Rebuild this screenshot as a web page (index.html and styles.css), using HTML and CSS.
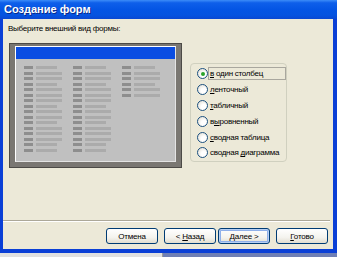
FILE: index.html
```html
<!DOCTYPE html>
<html lang="ru">

<head>
    <meta charset="UTF-8">
    <meta name="viewport" content="width=device-width, initial-scale=1.0">
    <title>Создание форм</title>
    <link rel="stylesheet" href="styles.css">
</head>

<body>
    <div class="window">
        <div class="titlebar">Создание форм</div>
        <div class="dialog-body">
            <p class="prompt">Выберите внешний вид формы:</p>
            <div class="main">
                <!-- образец формы -->
                <div class="preview">
                    <div class="preview-screen">
                        <div class="preview-caption"></div>
                        <div class="preview-fields">
                            <div class="preview-col">
                                <span class="row short"></span>
                                <span class="row"></span>
                                <span class="row"></span>
                                <span class="row short"></span>
                                <span class="row"></span>
                                <span class="row"></span>
                                <span class="row"></span>
                                <span class="row short"></span>
                                <span class="row"></span>
                                <span class="row"></span>
                                <span class="row short"></span>
                                <span class="row"></span>
                                <span class="row"></span>
                                <span class="row"></span>
                                <span class="row short"></span>
                                <span class="row short"></span>
                            </div>
                            <div class="preview-col">
                                <span class="row short"></span>
                                <span class="row"></span>
                                <span class="row"></span>
                                <span class="row short"></span>
                                <span class="row"></span>
                                <span class="row"></span>
                                <span class="row"></span>
                                <span class="row short"></span>
                                <span class="row"></span>
                                <span class="row"></span>
                                <span class="row short"></span>
                                <span class="row"></span>
                                <span class="row"></span>
                                <span class="row"></span>
                                <span class="row short"></span>
                                <span class="row short"></span>
                            </div>
                            <div class="preview-col">
                                <span class="row short"></span>
                                <span class="row"></span>
                                <span class="row"></span>
                                <span class="row short"></span>
                                <span class="row"></span>
                                <span class="row"></span>
                            </div>
                        </div>
                    </div>
                </div>
                <!-- варианты -->
                <div class="options">
                    <label class="option">
                        <span class="radio checked"></span>
                        <span class="option-text focused"><u>в</u> один столбец</span>
                    </label>
                    <label class="option">
                        <span class="radio"></span>
                        <span class="option-text"><u>л</u>енточный</span>
                    </label>
                    <label class="option">
                        <span class="radio"></span>
                        <span class="option-text"><u>т</u>абличный</span>
                    </label>
                    <label class="option">
                        <span class="radio"></span>
                        <span class="option-text">в<u>ы</u>ровненный</span>
                    </label>
                    <label class="option">
                        <span class="radio"></span>
                        <span class="option-text"><u>с</u>водная таблица</span>
                    </label>
                    <label class="option">
                        <span class="radio"></span>
                        <span class="option-text">сводная <u>д</u>иаграмма</span>
                    </label>
                </div>
            </div>
            <div class="spacer"></div>
            <div class="separator"></div>
            <div class="footer">
                <button class="btn">Отмена</button>
                <button class="btn btn-back">&lt; <u>Н</u>азад</button>
                <button class="btn btn-default"><u>Д</u>алее &gt;</button>
                <button class="btn btn-last"><u>Г</u>отово</button>
            </div>
        </div>
    </div>
    <div class="desktop">
        <div class="desktop-left"></div>
        <div class="desktop-right"></div>
    </div>
</body>

</html>
```

FILE: styles.css
```css
*,
*::before,
*::after {
    box-sizing: border-box;
}

body {
    margin: 0;
    width: 337px;
    height: 257px;
    overflow: hidden;
    font-family: 'Liberation Sans', Arial, sans-serif;
    font-size: 8px;
    letter-spacing: -0.25px;
    color: #000;
    background: #d8d8d8;
}

p {
    margin: 0;
}

.window {
    width: 337px;
    border-left: 3px solid #0a3fd6;
    border-right: 4px solid #0a3fd6;
    border-bottom: 4px solid #0a3fd6;
    background-color: #ece9d8;
}

.titlebar {
    height: 19px;
    margin: 0 -4px 0 -3px;
    padding: 3px 0 0 4px;
    color: #fff;
    font-size: 11px;
    font-weight: bold;
    letter-spacing: 0;
    line-height: 13px;
    background: linear-gradient(#3c8cf8 0%, #0e5fea 15%, #0455e4 50%, #0553e0 80%, #0a48d2 100%);
    text-shadow: 1px 1px 0 #0a2a8a;
}

.dialog-body {
    height: 230px;
    display: flex;
    flex-direction: column;
}

.prompt {
    margin: 5px 0 0 5px;
    height: 10px;
    line-height: 10px;
}

.main {
    display: flex;
    gap: 8px;
    margin-top: 9px;
    padding-left: 6px;
}

.preview {
    width: 173px;
    height: 125px;
    padding: 2px 5px 5px 5px;
    background-color: #7a7772;
    border: 1px solid #4c4a46;
}

.preview-screen {
    height: 100%;
    display: flex;
    flex-direction: column;
    background-color: #c0c0c0;
    border-top: 1px solid #fff;
    border-left: 1px solid #fff;
    border-right: 1px solid #e4e4e4;
    border-bottom: 1px solid #e4e4e4;
}

.preview-caption {
    height: 12px;
    background-color: #0b4de2;
}

.preview-fields {
    display: flex;
    padding: 7px 0 0 8px;
}

.preview-col {
    width: 49px;
    display: flex;
    flex-direction: column;
    gap: 2.5px;
}

.row {
    display: flex;
    gap: 3px;
    height: 3px;
}

.row::before {
    content: '';
    width: 9px;
    background-color: #8e8e8e;
}

.row::after {
    content: '';
    width: 26px;
    background-color: #ababab;
}

.row.short::after {
    width: 21px;
}

.options {
    width: 97px;
    height: 99px;
    margin-top: 20px;
    padding: 2px 0 0 6px;
    border: 1px solid #d0d0bf;
    border-radius: 4px;
}

.option {
    display: flex;
    align-items: center;
    height: 15.8px;
}

.radio {
    position: relative;
    flex: none;
    width: 11px;
    height: 11px;
    border: 1px solid #1c5180;
    border-radius: 50%;
    background: radial-gradient(circle at 65% 65%, #fff 30%, #dcd8cc 100%);
}

.radio.checked::after {
    content: '';
    position: absolute;
    left: 2.5px;
    top: 2.5px;
    width: 4px;
    height: 4px;
    border-radius: 50%;
    background-color: #2aa32a;
}

.option-text {
    padding-left: 2px;
    line-height: 11px;
    white-space: nowrap;
}

.option-text.focused {
    width: 78px;
    height: 13px;
    padding-left: 1px;
    border: 1px solid #a9a79e;
}

u {
    text-decoration-thickness: 1px;
    text-underline-offset: 1px;
}

.spacer {
    flex: 1;
}

.separator {
    height: 2px;
    margin-right: 3px;
    border-top: 1px solid #aca899;
    border-bottom: 1px solid #fff;
}

.footer {
    display: flex;
    justify-content: flex-end;
    gap: 6px;
    height: 16px;
    margin: 6px 5px 5px 0;
}

.btn {
    width: 52px;
    height: 16px;
    padding: 0;
    font-family: 'Liberation Sans', Arial, sans-serif;
    font-size: 8px;
    letter-spacing: -0.2px;
    color: #000;
    border: 1px solid #003c74;
    border-radius: 3px;
    background: linear-gradient(#ffffff 0%, #f4f3ee 60%, #e2ded0 100%);
}

.btn-back {
    margin-right: -4px;
}

.btn-default {
    box-shadow: inset 0 0 0 1px #b8d0f4, inset 0 0 0 2px #8fb0ea;
}

.desktop {
    display: flex;
    height: 4px;
}

.desktop-left {
    width: 163px;
    background-color: #e0e0e0;
    border-right: 1px solid #9a9a9a;
}

.desktop-right {
    flex: 1;
    background-color: #6f7fb5;
}
```
